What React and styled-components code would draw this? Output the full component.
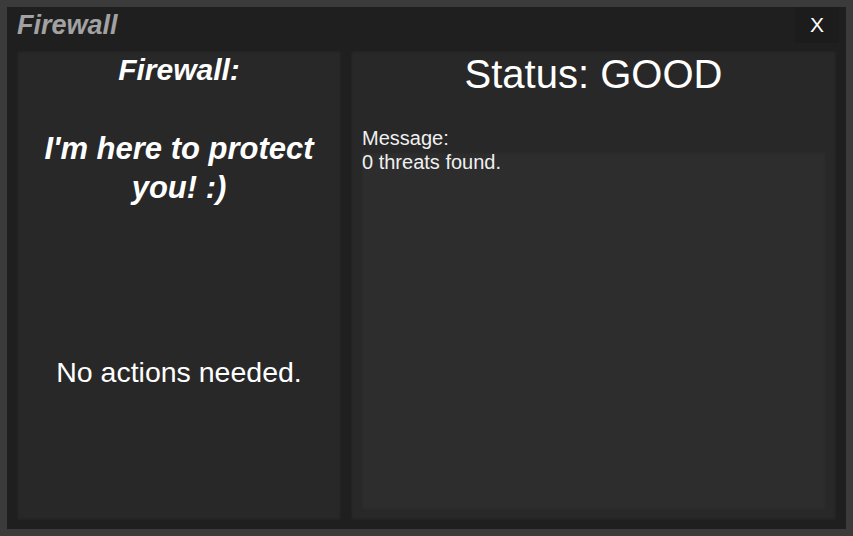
import React from "react";
import styled, { createGlobalStyle } from "styled-components";

const GlobalStyle = createGlobalStyle`
  html, body {
    margin: 0;
    padding: 0;
    background: #3b3b3b;
    font-family: "Liberation Sans", Arial, sans-serif;
  }
`;

const Window = styled.div`
  margin: 7px;
  width: 839px;
  height: 522px;
  background: #1f1f1f;
  display: flex;
  flex-direction: column;
  box-sizing: border-box;
`;

const TitleBar = styled.div`
  height: 36px;
  display: flex;
  align-items: center;
  justify-content: space-between;
  padding-left: 10px;
  padding-right: 7px;
  flex-shrink: 0;
`;

const Title = styled.div`
  color: #a2a2a2;
  font-size: 27px;
  font-weight: bold;
  font-style: italic;
`;

const CloseButton = styled.div`
  width: 44px;
  height: 36px;
  display: flex;
  align-items: center;
  justify-content: center;
  color: #ffffff;
  font-size: 21px;
  background: #1c1c1c;
`;

const Body = styled.div`
  flex: 1;
  display: grid;
  grid-template-columns: 324px 1fr;
  gap: 10px;
  padding: 8px 10px 9px;
  min-height: 0;
`;

const Pane = styled.div`
  background: #282828;
  box-shadow: inset 0 0 3px rgba(0, 0, 0, 0.35);
  display: flex;
  flex-direction: column;
  align-items: ${(p) => (p.$center ? "center" : "stretch")};
  padding: ${(p) => p.$pad || "0"};
  color: #ffffff;
  text-align: center;
  min-height: 0;
`;

const Heading = styled.div`
  font-size: ${(p) => p.$size}px;
  line-height: ${(p) => p.$lh}px;
  font-weight: ${(p) => (p.$italic ? "bold" : "normal")};
  font-style: ${(p) => (p.$italic ? "italic" : "normal")};
  margin-top: ${(p) => p.$top || 0}px;
`;

const Label = styled.div`
  font-size: 20px;
  line-height: 28px;
  text-align: left;
  margin-top: 27px;
  padding-left: 1px;
  color: #f0f0f0;
`;

const MessageBox = styled.div`
  flex: 1;
  background: #2d2d2d;
  box-shadow: inset 0 0 3px rgba(0, 0, 0, 0.2);
  text-align: left;
  font-size: 20px;
  line-height: 20px;
  padding-left: 1px;
  color: #f0f0f0;
`;

export default function App() {
  return (
    <>
      <GlobalStyle />
      <Window>
        <TitleBar>
          <Title>Firewall</Title>
          <CloseButton>X</CloseButton>
        </TitleBar>
        <Body>
          <Pane $center $pad="1px 0 0">
            <Heading $size={30} $lh={36} $italic>
              Firewall:
            </Heading>
            <Heading $size={31} $lh={39} $italic $top={41}>
              I'm here to protect
              <br />
              you! :)
            </Heading>
            <Heading $size={28.5} $lh={32} $top={149}>
              No actions needed.
            </Heading>
          </Pane>
          <Pane $pad="0 10px 10px">
            <Heading $size={40} $lh={46}>
              Status: GOOD
            </Heading>
            <Label>Message:</Label>
            <MessageBox>0 threats found.</MessageBox>
          </Pane>
        </Body>
      </Window>
    </>
  );
}
